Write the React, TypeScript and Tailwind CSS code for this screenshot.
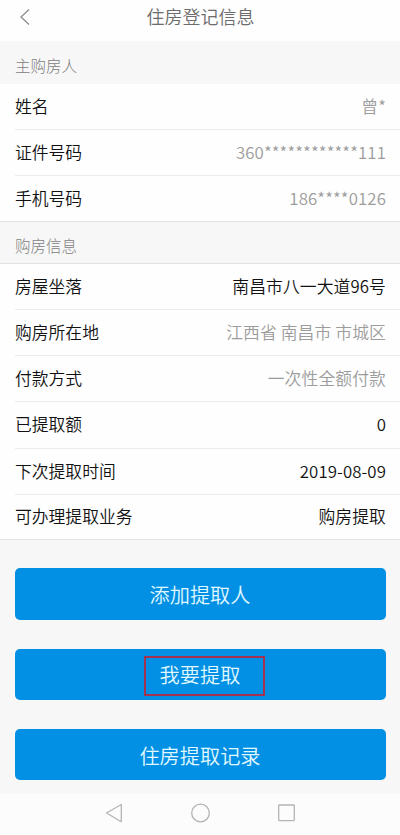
import React from 'react'

type Item = {
  label: string
  value: string
  muted?: boolean
}

const buyer: Item[] = [
  { label: '姓名', value: '曾*', muted: true },
  { label: '证件号码', value: '360************111', muted: true },
  { label: '手机号码', value: '186****0126', muted: true },
]

const house: Item[] = [
  { label: '房屋坐落', value: '南昌市八一大道96号' },
  { label: '购房所在地', value: '江西省 南昌市 市城区', muted: true },
  { label: '付款方式', value: '一次性全额付款', muted: true },
  { label: '已提取额', value: '0' },
  { label: '下次提取时间', value: '2019-08-09' },
  { label: '可办理提取业务', value: '购房提取' },
]

const SectionTitle = ({ children }: { children: React.ReactNode }) => (
  <h2 className="flex h-[43px] items-center pl-[15px] pt-[7px] text-[15.5px] font-light text-[#808080]">
    {children}
  </h2>
)

const List = ({ items }: { items: Item[] }) => (
  <ul className="border-b border-[#e2e2e2] bg-[#fefefe] pl-[15px]">
    {items.map((item) => (
      <li
        key={item.label}
        className="flex h-[46.15px] items-center justify-between border-b border-[#ebebeb] pr-[14px] text-[16.8px] text-[#111] last:h-[44.7px] last:border-b-0"
      >
        <span>{item.label}</span>
        <span className={item.muted ? 'tracking-[0.12px] text-[#9c9c9c]' : 'tracking-[0.1px]'}>
          {item.value}
        </span>
      </li>
    ))}
  </ul>
)

const Button = ({ children }: { children: React.ReactNode }) => (
  <button className="flex h-[51.5px] w-full items-center justify-center rounded-[5px] bg-[#0290e4] pt-[2px] text-[20.2px] text-[#e0f8ff]">
    {children}
  </button>
)

const App = () => {
  return (
    <div className="flex h-[835px] w-[400px] flex-col overflow-hidden bg-[#f7f7f7] font-['Noto_Sans_CJK_SC',sans-serif] font-[350]">
      <header className="grid h-[41px] grid-cols-[40px_1fr_39px] bg-[#fefefe] pb-[8px]">
        <button className="flex items-center pl-[19px]">
          <svg width="12" height="18" viewBox="0 0 12 18" fill="none">
            <path d="M10 1.5L2 9l8 7.5" stroke="#888" strokeWidth="1.2" />
          </svg>
        </button>
        <h1 className="flex items-center justify-center text-[18px] text-[#6c6c6c]">
          住房登记信息
        </h1>
      </header>

      <SectionTitle>主购房人</SectionTitle>
      <List items={buyer} />
      <div className="-mt-px">
        <SectionTitle>购房信息</SectionTitle>
      </div>
      <div className="-mt-px border-t border-[#e2e2e2]">
        <List items={house} />
      </div>

      <div className="flex flex-1 flex-col gap-[28.8px] px-[14.5px] pt-[28px]">
        <Button>添加提取人</Button>
        <Button>
          <span className="relative">
            我要提取
            <span className="absolute -left-[16px] -right-[24.5px] -top-[4px] h-[40px] border-2 border-[#a53250]" />
          </span>
        </Button>
        <Button>住房提取记录</Button>
      </div>

      <nav className="h-[41px] bg-[#fdfcfd]">
        <svg
          width="400"
          height="41"
          fill="none"
          stroke="#b4b4b4"
          strokeWidth="1.3"
          strokeLinejoin="round"
        >
          <path d="M121.3 10.5v17.2L106.5 19z" />
          <circle cx="200.5" cy="19" r="8.8" />
          <rect x="278.7" y="11" width="15.6" height="15.6" rx="0.5" />
        </svg>
      </nav>
    </div>
  )
}

export default App
